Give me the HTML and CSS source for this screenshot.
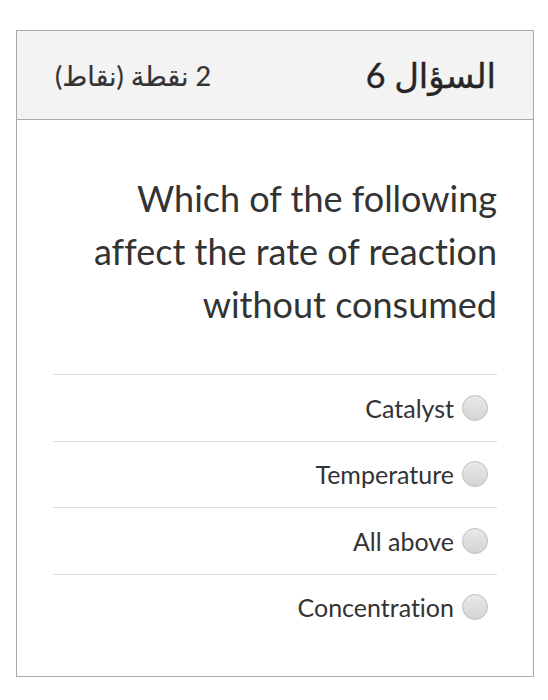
FILE: index.html
```html
<!DOCTYPE html>
<html lang="ar">
<head>
<meta charset="utf-8">
<link rel="stylesheet" href="styles.css">
</head>
<body>
<div class="card" dir="rtl">
  <div class="head">
    <div class="title">السؤال 6</div>
    <div class="points">2 نقطة (نقاط)</div>
  </div>
  <div class="content">
    <div class="question">Which of the following affect the rate of reaction without consumed</div>
    <div class="options">
      <label class="opt"><span class="radio"></span><span class="lbl">Catalyst</span></label>
      <label class="opt"><span class="radio"></span><span class="lbl">Temperature</span></label>
      <label class="opt"><span class="radio"></span><span class="lbl">All above</span></label>
      <label class="opt"><span class="radio"></span><span class="lbl">Concentration</span></label>
    </div>
  </div>
</div>
</body>
</html>
```

FILE: styles.css
```css
html, body {
  margin: 0;
  padding: 0;
  background: #fff;
}
body {
  font-family: "Lato", "DejaVu Sans", sans-serif;
  color: #333;
  padding: 30px 14px 0 16px;
  font-variant-ligatures: no-common-ligatures;
}
.card {
  border: 1px solid #a9a9a9;
  height: 647px;
  box-sizing: border-box;
}
.head {
  height: 88px;
  background: #f3f3f3;
  border-bottom: 1px solid #a9a9a9;
  display: flex;
  align-items: center;
  justify-content: space-between;
  padding: 0 37px 0 38px;
}
.title {
  font-size: 34px;
  color: #262626;
  -webkit-text-stroke: 0.4px #262626;
}
.points {
  font-size: 27px;
  color: #333;
  -webkit-text-stroke: 0.2px #333;
}
.content {
  padding: 52px 36px 0 36px;
}
.question {
  direction: ltr;
  text-align: right;
  font-size: 36px;
  line-height: 53px;
  color: #333;
  width: 420px;
  margin-left: auto;
}
.options {
  margin-top: 43px;
}
.opt {
  display: flex;
  align-items: center;
  gap: 8px;
  height: 65.5px;
  border-top: 1px solid #ddd;
  padding-right: 9px;
}
.radio {
  width: 26px;
  height: 26px;
  border-radius: 50%;
  border: 1px solid #bdbdbd;
  background: linear-gradient(#e9e9e9, #d4d4d4);
  box-sizing: border-box;
  flex: none;
}
.lbl {
  font-size: 25px;
  color: #333;
}
```
